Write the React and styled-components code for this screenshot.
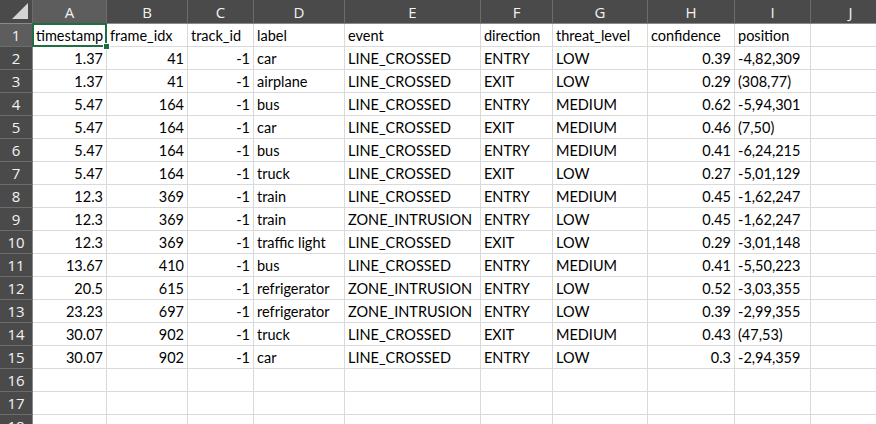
import React from "react";
import styled, { createGlobalStyle } from "styled-components";

const Global = createGlobalStyle`
  html, body { margin: 0; padding: 0; background: #ffffff; overflow: hidden; }
  #root { width: 876px; height: 424px; overflow: hidden; }
`;

const COLS = [
  { key: "A", w: 74 },
  { key: "B", w: 81 },
  { key: "C", w: 66 },
  { key: "D", w: 91 },
  { key: "E", w: 136 },
  { key: "F", w: 72 },
  { key: "G", w: 95 },
  { key: "H", w: 87 },
  { key: "I", w: 76 },
  { key: "J", w: 80 },
];

const header = ["timestamp", "frame_idx", "track_id", "label", "event", "direction", "threat_level", "confidence", "position"];

const data = [
  ["1.37", "41", "-1", "car", "LINE_CROSSED", "ENTRY", "LOW", "0.39", "-4,82,309"],
  ["1.37", "41", "-1", "airplane", "LINE_CROSSED", "EXIT", "LOW", "0.29", "(308,77)"],
  ["5.47", "164", "-1", "bus", "LINE_CROSSED", "ENTRY", "MEDIUM", "0.62", "-5,94,301"],
  ["5.47", "164", "-1", "car", "LINE_CROSSED", "EXIT", "MEDIUM", "0.46", "(7,50)"],
  ["5.47", "164", "-1", "bus", "LINE_CROSSED", "ENTRY", "MEDIUM", "0.41", "-6,24,215"],
  ["5.47", "164", "-1", "truck", "LINE_CROSSED", "EXIT", "LOW", "0.27", "-5,01,129"],
  ["12.3", "369", "-1", "train", "LINE_CROSSED", "ENTRY", "MEDIUM", "0.45", "-1,62,247"],
  ["12.3", "369", "-1", "train", "ZONE_INTRUSION", "ENTRY", "LOW", "0.45", "-1,62,247"],
  ["12.3", "369", "-1", "traffic light", "LINE_CROSSED", "EXIT", "LOW", "0.29", "-3,01,148"],
  ["13.67", "410", "-1", "bus", "LINE_CROSSED", "ENTRY", "MEDIUM", "0.41", "-5,50,223"],
  ["20.5", "615", "-1", "refrigerator", "ZONE_INTRUSION", "ENTRY", "LOW", "0.52", "-3,03,355"],
  ["23.23", "697", "-1", "refrigerator", "ZONE_INTRUSION", "ENTRY", "LOW", "0.39", "-2,99,355"],
  ["30.07", "902", "-1", "truck", "LINE_CROSSED", "EXIT", "MEDIUM", "0.43", "(47,53)"],
  ["30.07", "902", "-1", "car", "LINE_CROSSED", "ENTRY", "LOW", "0.3", "-2,94,359"],
];

const RIGHT = [true, true, true, false, false, false, false, true, false];

const Sheet = styled.div`
  display: grid;
  grid-template-columns: 33px ${COLS.map((c) => c.w + "px").join(" ")};
  grid-auto-rows: 23px;
  grid-template-rows: 24px;
  font-family: Lato, "Liberation Sans", sans-serif;
  font-size: 14.5px;
  color: #000;
  width: 876px;
`;

const Corner = styled.div`
  background: #4a4a4a;
  border-right: 1px solid #6c6c6c;
  border-bottom: 1px solid #8a8a8a;
  position: relative;
  &::after {
    content: "";
    position: absolute;
    right: 4px;
    bottom: 4px;
    width: 0;
    height: 0;
    border-left: 16px solid transparent;
    border-bottom: 16px solid #d4d4d4;
  }
`;

const ColHead = styled.div`
  background: ${(p) => (p.$sel ? "#5d5d5d" : "#4a4a4a")};
  color: #f2f2f2;
  border-right: 1px solid #6c6c6c;
  border-bottom: 1px solid #8a8a8a;
  display: flex;
  align-items: center;
  justify-content: center;
  font-family: "Open Sans", "Liberation Sans", sans-serif;
  font-size: 15px;
  padding-top: 1px;
`;

const RowHead = styled.div`
  background: ${(p) => (p.$sel ? "#5d5d5d" : "#4a4a4a")};
  color: #f2f2f2;
  border-right: 1px solid #8a8a8a;
  border-bottom: 1px solid #6c6c6c;
  display: flex;
  align-items: center;
  justify-content: center;
  font-family: "Open Sans", "Liberation Sans", sans-serif;
  font-size: 15px;
`;

const Cell = styled.div`
  border-right: 1px solid #dadada;
  border-bottom: 1px solid #dadada;
  display: flex;
  align-items: center;
  justify-content: ${(p) => (p.$right ? "flex-end" : "flex-start")};
  padding: 0 ${(p) => (p.$right ? "3px" : "0")} 0 ${(p) => (p.$right ? "0" : "3px")};
  white-space: nowrap;
  overflow: hidden;
  position: relative;
  padding-top: 1px;
`;

const SelCell = styled(Cell)`
  overflow: visible;
  z-index: 2;
  &::before {
    content: "";
    position: absolute;
    left: -1px;
    top: -1px;
    right: -1px;
    bottom: -1px;
    border: 2px solid #1e6e42;
    pointer-events: none;
  }
  &::after {
    content: "";
    position: absolute;
    right: -4px;
    bottom: -4px;
    width: 5px;
    height: 5px;
    background: #1e6e42;
    border: 1px solid #fff;
  }
`;

const Clip = styled.span`
  display: block;
  overflow: hidden;
  width: 100%;
`;

export default function App() {
  const rows = [header, ...data];
  const total = 18;
  return (
    <>
      <Global />
      <Sheet>
        <Corner />
        {COLS.map((c) => (
          <ColHead key={c.key} $sel={c.key === "A"}>{c.key}</ColHead>
        ))}
        {Array.from({ length: total }).map((_, r) => {
          const row = rows[r];
          return (
            <React.Fragment key={r}>
              <RowHead $sel={r === 0}>{r + 1}</RowHead>
              {COLS.map((c, ci) => {
                const v = row && ci < 9 ? row[ci] : "";
                const right = r > 0 && ci < 9 && RIGHT[ci];
                if (r === 0 && ci === 0) {
                  return (
                    <SelCell key={c.key}>
                      <Clip>{v}</Clip>
                    </SelCell>
                  );
                }
                return (
                  <Cell key={c.key} $right={right}>
                    {v}
                  </Cell>
                );
              })}
            </React.Fragment>
          );
        })}
      </Sheet>
    </>
  );
}
